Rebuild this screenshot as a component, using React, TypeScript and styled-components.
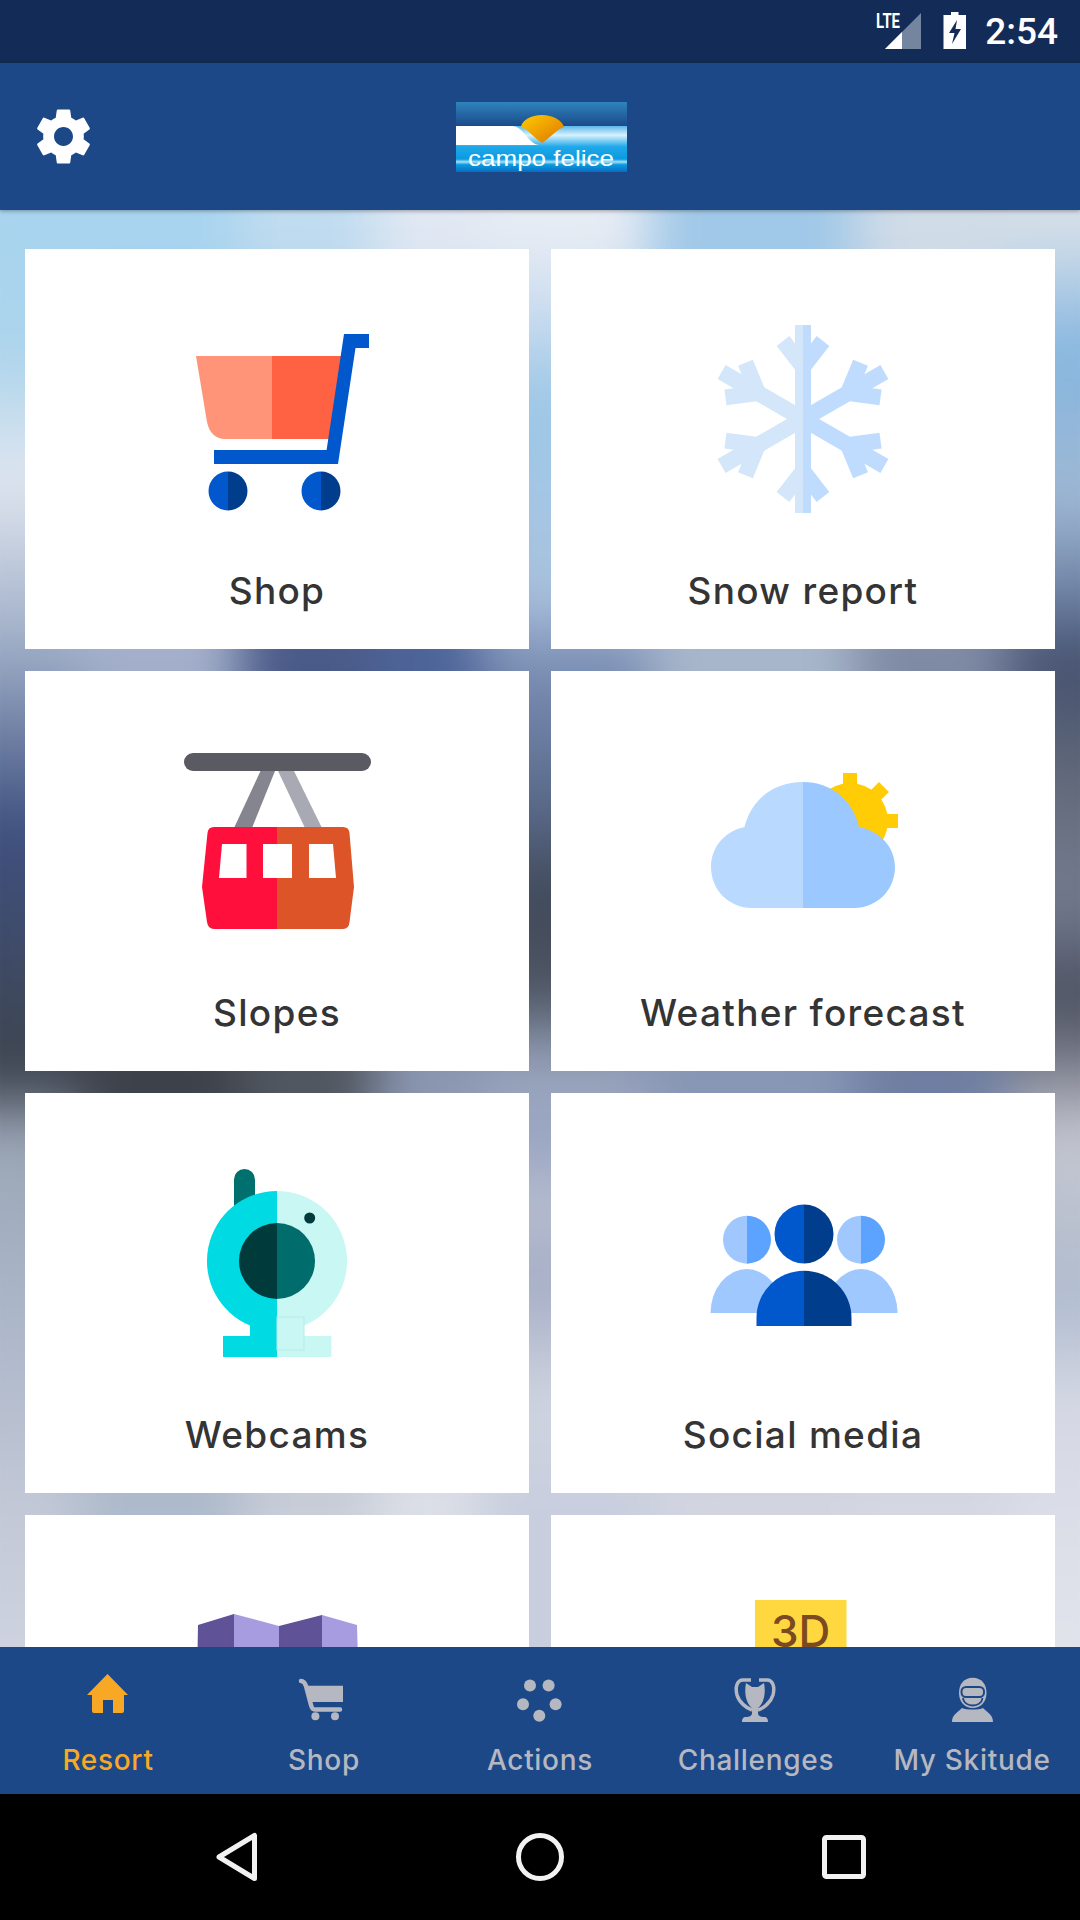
import React from "react";
import styled, { createGlobalStyle } from "styled-components";

const Global = createGlobalStyle`
  html, body { margin: 0; padding: 0; background: #000; }
  #root { width: 1080px; height: 1920px; }
`;

const Page = styled.div`
  width: 1080px;
  height: 1920px;
  display: flex;
  flex-direction: column;
  overflow: hidden;
  font-family: Inter, "Liberation Sans", sans-serif;
`;

const StatusBar = styled.div`
  height: 63px;
  flex: none;
  background: #132c57;
  display: flex;
  align-items: center;
  justify-content: flex-end;
  padding-right: 22px;
`;

const StatusIcons = styled.svg`
  width: 100px;
  height: 63px;
  margin-right: 19px;
`;

const Clock = styled.span`
  font-family: Roboto, sans-serif;
  font-weight: 500;
  font-size: 37px;
  color: #fff;
  line-height: 63px;
`;

const Header = styled.header`
  height: 147px;
  flex: none;
  background: #1c4888;
  position: relative;
  z-index: 2;
  box-shadow: 0 1px 4px rgba(0, 0, 0, 0.35);
  display: grid;
  grid-template-columns: 455.5px 171px 1fr;
  align-items: center;
`;

const GearIcon = styled.svg`
  width: 65px;
  height: 65px;
  margin-left: 31px;
  fill: #fff;
`;

const Logo = styled.svg`
  width: 171px;
  height: 70px;
`;

const Viewport = styled.main`
  flex: 1;
  position: relative;
  overflow: hidden;
  background: #8b9ab2;
`;

const Backdrop = styled.div`
  position: absolute;
  top: -60px;
  bottom: -60px;
  left: -60px;
  right: -60px;
  display: flex;
  filter: blur(26px);
`;

const BackdropColumn = styled.div<{ $width: number; $stops: string }>`
  flex: none;
  width: ${(p) => p.$width}px;
  background: linear-gradient(180deg, ${(p) => p.$stops});
`;

const Grid = styled.div`
  position: relative;
  display: grid;
  grid-template-columns: 504px 504px;
  grid-auto-rows: 400px;
  gap: 22px;
  padding: 39px 25px;
`;

const Card = styled.div`
  background: #fff;
  display: flex;
  flex-direction: column;
  align-items: center;
  padding-top: 61px;
  box-sizing: border-box;
`;

const CardIcon = styled.svg`
  width: 200px;
  height: 200px;
  flex: none;
  overflow: visible;
`;

const CardLabel = styled.div`
  margin-top: 61px;
  font-size: 37px;
  font-weight: 450;
  line-height: 40px;
  letter-spacing: 1.3px;
  color: #343434;
  white-space: nowrap;
`;

const BottomNav = styled.nav`
  height: 147px;
  flex: none;
  background: #1c4888;
  position: relative;
  z-index: 2;
  display: grid;
  grid-template-columns: repeat(5, 216px);
`;

const NavItem = styled.div<{ $active?: boolean }>`
  display: flex;
  flex-direction: column;
  align-items: center;
  padding-top: 20px;
  color: ${(p) => (p.$active ? "#f9a825" : "#b5b8c0")};
`;

const NavIcon = styled.svg`
  width: 60px;
  height: 60px;
  fill: currentColor;
  flex: none;
`;

const NavLabel = styled.div`
  margin-top: 16px;
  font-size: 28px;
  font-weight: 450;
  line-height: 34px;
  letter-spacing: 0.7px;
  white-space: nowrap;
`;

const SystemBar = styled.div`
  height: 126px;
  flex: none;
  background: #000;
  display: grid;
  grid-template-columns: repeat(3, 304px);
  justify-content: center;
  align-items: center;
  justify-items: center;
`;

const SystemIcon = styled.svg`
  width: 60px;
  height: 60px;
  fill: none;
  stroke: #f2f2f2;
  stroke-width: 5;
  stroke-linejoin: round;
`;

const IconCart = () => (
  <CardIcon viewBox="0 0 200 200">
    <path d="M19 46H95V129H48C38 129 32 122 30 112Z" fill="#ff9478" />
    <path d="M95 46H167L157 129H95Z" fill="#ff6243" />
    <path d="M167 24H192V38H178.5L161 154H37V140H149.6Z" fill="#0058cc" />
    <path d="M51 161.5a19.5 19.5 0 0 0 0 39Z" fill="#0058cc" />
    <path d="M51 161.5a19.5 19.5 0 0 1 0 39Z" fill="#003d8c" />
    <path d="M144 161.5a19.5 19.5 0 0 0 0 39Z" fill="#0058cc" />
    <path d="M144 161.5a19.5 19.5 0 0 1 0 39Z" fill="#003d8c" />
  </CardIcon>
);

const flakeAngles = [0, 60, 120, 180, 240, 300];

const FlakeArms = ({ color }: { color: string }) => (
  <g stroke={color} strokeWidth="16" fill="none">
    {flakeAngles.map((a) => (
      <g key={a} transform={`translate(100 109) rotate(${a})`}>
        <path d="M0 0V-94" />
        <path d="M-20 -78L0 -52L20 -78" />
      </g>
    ))}
  </g>
);

const IconSnow = () => (
  <CardIcon viewBox="0 0 200 200">
    <defs>
      <clipPath id="flakeLeft">
        <rect x="-10" y="0" width="110" height="220" />
      </clipPath>
      <clipPath id="flakeRight">
        <rect x="100" y="0" width="110" height="220" />
      </clipPath>
    </defs>
    <g clipPath="url(#flakeLeft)">
      <FlakeArms color="#d3e6fa" />
    </g>
    <g clipPath="url(#flakeRight)">
      <FlakeArms color="#bfdcff" />
    </g>
  </CardIcon>
);

const IconGondola = () => (
  <CardIcon viewBox="0 0 200 200">
    <path d="M83.500 39H98L75 96H57Z" fill="#85858f" />
    <path d="M101 39H117L145 96H128Z" fill="#a9a9b4" />
    <rect x="7" y="21" width="187" height="18" rx="9" fill="#5a5a62" />
    <path d="M100 95H37Q31 95 30.500 101L25 155L30 190Q31 197 37 197H100Z" fill="#ff0f3c" />
    <path d="M100 95H166Q172 95 172.500 101L177 155L172.500 190Q172 197 166 197H100Z" fill="#dc5427" />
    <path d="M45 112H69.500V146H42Z" fill="#fff" />
    <rect x="86" y="112" width="29" height="34" fill="#fff" />
    <path d="M132 112H156L159 146H132Z" fill="#fff" />
  </CardIcon>
);

const gearTeeth = [0, 45, 90, 135];

const IconWeather = () => (
  <CardIcon viewBox="0 0 200 200">
    <g fill="#ffcc05">
      <circle cx="147" cy="89" r="38" />
      {gearTeeth.map((a) => (
        <rect key={a} x="140" y="41" width="14" height="48" transform={`rotate(${a} 147 89)`} />
      ))}
    </g>
    <path d="M100 50C70 50 48 68 41.500 95C22 99 8 115 8 135C8 158 26 176 49 176H100Z" fill="#b9d9ff" />
    <path d="M100 50C128 50 150 68 156 95C177 99 192 115 192 135C192 158 174 176 151 176H100Z" fill="#9ac8ff" />
  </CardIcon>
);

const IconWebcam = () => (
  <CardIcon viewBox="0 0 200 200">
    <path d="M57 60V25.500a10.500 10.500 0 0 1 21 0V60Z" fill="#00706e" />
    <path d="M100 37a70 70 0 0 0 -27 134.600V182H46V203H100Z" fill="#00dbe3" />
    <path d="M100 37a70 70 0 0 1 27 134.600V182H154.400V203H100Z" fill="#c9f7f4" />
    <rect x="100" y="163" width="27" height="33" fill="none" stroke="#b5ecea" strokeWidth="1" />
    <path d="M100 69a38 38 0 0 0 0 76Z" fill="#003a3a" />
    <path d="M100 69a38 38 0 0 1 0 76Z" fill="#006c6c" />
    <circle cx="132.700" cy="64" r="5.500" fill="#003a3a" />
  </CardIcon>
);

const IconSocial = () => (
  <CardIcon viewBox="0 0 200 200">
    <path d="M44 115A37 44 0 0 0 7.500 159H44Z" fill="#9fc8ff" />
    <path d="M44 115A37 44 0 0 1 80 159H44Z" fill="#9fc8ff" />
    <path d="M158 115A37 44 0 0 0 122 159H158Z" fill="#9fc8ff" />
    <path d="M158 115A37 44 0 0 1 194.600 159H158Z" fill="#9fc8ff" />
    <path d="M44 61.700a24 24 0 0 0 0 48Z" fill="#a0c8ff" />
    <path d="M44 61.700a24 24 0 0 1 0 48Z" fill="#5ba3ff" />
    <path d="M158 61.700a24 24 0 0 0 0 48Z" fill="#a0c8ff" />
    <path d="M158 61.700a24 24 0 0 1 0 48Z" fill="#5ba3ff" />
    <path d="M101 50.500a29.500 29.500 0 0 0 0 59Z" fill="#0058cc" />
    <path d="M101 50.500a29.500 29.500 0 0 1 0 59Z" fill="#003d8c" />
    <path d="M101 116.700A47.500 47 0 0 0 53.500 163.700V172H101Z" fill="#0058cc" />
    <path d="M101 116.700A47.500 47 0 0 1 148.500 163.700V172H101Z" fill="#003d8c" />
  </CardIcon>
);

const IconMap = () => (
  <CardIcon viewBox="0 0 200 200">
    <path d="M21 49L57 38V160H19Z" fill="#5f5297" />
    <path d="M57 38L102 50V160H57Z" fill="#a89ce0" />
    <path d="M102 50L145 39V160H102Z" fill="#5f5297" />
    <path d="M145 39L180 49L183 160H145Z" fill="#a89ce0" />
  </CardIcon>
);

const ThreeDText = styled.text`
  font-family: Inter, sans-serif;
  font-size: 44px;
  font-weight: 500;
  fill: #7b4a22;
`;

const Icon3D = () => (
  <CardIcon viewBox="0 0 200 200">
    <rect x="52" y="24" width="91.500" height="130" fill="#ffd83f" />
    <ThreeDText x="97.700" y="71" textAnchor="middle">
      3D
    </ThreeDText>
  </CardIcon>
);

const cards: { label?: string; icon: React.ReactNode }[] = [
  { label: "Shop", icon: <IconCart /> },
  { label: "Snow report", icon: <IconSnow /> },
  { label: "Slopes", icon: <IconGondola /> },
  { label: "Weather forecast", icon: <IconWeather /> },
  { label: "Webcams", icon: <IconWebcam /> },
  { label: "Social media", icon: <IconSocial /> },
  { icon: <IconMap /> },
  { icon: <Icon3D /> },
];

type Stop = [number, string];

const toStops = (stops: Stop[]) => stops.map(([y, c]) => `${c} ${y - 150}px`).join(", ");

const plateau = (stops: Stop[]): Stop[] =>
  stops.flatMap(([y, c]): Stop[] => [
    [y - 25, c],
    [y + 25, c],
  ]);

const backdrop: { width: number; stops: Stop[] }[] = [
  {
    width: 140,
    stops: [
      [210, "#a8d4ef"], [350, "#acd4ec"], [480, "#e0e6f0"], [640, "#a0afc8"], [830, "#3f5080"],
      [1034, "#3e4756"], [1082, "#3f4450"], [1130, "#9aa5b5"], [1300, "#aab5c8"], [1504, "#c2c8d6"], [1647, "#cfd3e0"],
    ],
  },
  { width: 160, stops: plateau([[230, "#a8d4ef"], [660, "#a4b0cb"], [1082, "#3c4049"], [1504, "#aebbcc"]]) },
  { width: 135, stops: plateau([[230, "#c0dcf0"], [660, "#4a5a88"], [1082, "#50565f"], [1504, "#c8cdd8"]]) },
  { width: 105, stops: plateau([[230, "#e0e8f3"], [660, "#4c6398"], [1082, "#8a96b0"], [1504, "#dcdfe7"]]) },
  {
    width: 170,
    stops: [
      [230, "#e8edf4"], [300, "#d0dff0"], [400, "#9dc7e6"], [500, "#a4c7e5"], [600, "#a9c0dc"], [660, "#7d90b6"],
      [800, "#5a6b8c"], [900, "#404858"], [1000, "#505866"], [1050, "#8f9ab0"], [1082, "#9aa5c0"], [1150, "#9aa5c2"],
      [1200, "#b8bfd0"], [1280, "#a5adc5"], [1400, "#cfd4e0"], [1504, "#c8cede"],
    ],
  },
  { width: 205, stops: plateau([[230, "#a0c8e8"], [660, "#a8b6cb"], [1082, "#8796b5"], [1504, "#d2d5e0"]]) },
  { width: 153, stops: plateau([[230, "#d0dce8"], [660, "#7f8ba5"], [1082, "#6e7ea2"], [1504, "#d5d8e2"]]) },
  {
    width: 132,
    stops: [
      [230, "#d5dfe9"], [350, "#86b6e0"], [500, "#9fb8d4"], [600, "#6b7ea0"], [660, "#44506e"], [800, "#666d7c"],
      [900, "#747b90"], [1000, "#4a4f5e"], [1082, "#8c8f9c"], [1130, "#c5c7d0"], [1300, "#b0bccf"], [1400, "#d5d8e4"], [1647, "#e2e4ec"],
    ],
  },
];

const navItems: { label: string; active?: boolean; icon: React.ReactNode }[] = [
  {
    label: "Resort",
    active: true,
    icon: <path d="M29.500 7L50 28H46V44Q46 46 44 46H35V33H25V46H16Q14 46 14 44V28H9Z" />,
  },
  {
    label: "Shop",
    icon: (
      <>
        <path d="M11.500 18.700H49V35H16Z" />
        <path
          d="M7 14C10 14 11 16 12 19L17 38C18 42 19 42.500 21 42.500H46"
          fill="none"
          stroke="currentColor"
          strokeWidth="4.500"
          strokeLinecap="round"
        />
        <circle cx="21.400" cy="49.300" r="4" />
        <circle cx="41" cy="49.300" r="4" />
      </>
    ),
  },
  {
    label: "Actions",
    icon: (
      <>
        <circle cx="20" cy="18.600" r="6" />
        <circle cx="38.600" cy="18.600" r="6" />
        <circle cx="13" cy="37.300" r="6" />
        <circle cx="45.600" cy="37.300" r="6" />
        <circle cx="29.300" cy="48.700" r="6" />
      </>
    ),
  },
  {
    label: "Challenges",
    icon: (
      <>
        <path d="M20 16L26 20H32L38 16C40 26 38 36 32 41V46C32 49 35 50 38 50C41 50 42 52 42 55H16C16 52 17 50 20 50C23 50 26 49 26 46V41C20 36 18 26 20 16Z" />
        <path
          d="M25 13H17C11 13 9 20 11 28C13 35 20 41 26 43M33 13H41C47 13 49 20 47 28C45 35 38 41 32 43"
          fill="none"
          stroke="currentColor"
          strokeWidth="3.500"
        />
      </>
    ),
  },
  {
    label: "My Skitude",
    icon: (
      <>
        <path d="M10 55C10 48 15 46 20 41C24 43 37 43 41 41C46 46 51 48 51 55Z" />
        <path d="M30.700 10.700C22 10.700 17 17 17 26C17 35 23 41 30.700 41C38.500 41 44.500 35 44.500 26C44.500 17 39.500 10.700 30.700 10.700Z" />
        <rect x="19.500" y="20" width="22.500" height="10" rx="4.500" fill="#b5b8c0" stroke="#1c4888" strokeWidth="2" />
        <path d="M21 31C22 41 39.500 41 40.500 31" fill="none" stroke="#1c4888" strokeWidth="1.800" />
      </>
    ),
  },
];

export default function App() {
  return (
    <Page>
      <Global />
      <StatusBar>
        <StatusIcons viewBox="0 0 100 63">
          <path d="M19 49L55 13V49Z" fill="#73859f" />
          <path d="M19 49L36 32V49Z" fill="#fff" />
          <text
            x="10"
            y="28"
            textLength="24"
            lengthAdjust="spacingAndGlyphs"
            fontFamily="Roboto, sans-serif"
            fontWeight="700"
            fontSize="21"
            fill="#fff"
          >
            LTE
          </text>
          <path d="M77.500 15H85V12H92.500V15H100V49H77.500Z" fill="#fff" />
          <path d="M91 20L83 33H88.500L86 44L95 29H89.500Z" fill="#132c57" />
        </StatusIcons>
        <Clock>2:54</Clock>
      </StatusBar>
      <Header>
        <GearIcon viewBox="0 0 24 24">
          <path d="M19.43 12.98c.04-.32.07-.64.07-.98s-.03-.66-.07-.98l2.11-1.65c.19-.15.24-.42.12-.64l-2-3.46c-.12-.22-.39-.3-.61-.22l-2.49 1c-.52-.4-1.08-.73-1.69-.98l-.38-2.65C14.46 2.18 14.25 2 14 2h-4c-.25 0-.46.18-.49.42l-.38 2.65c-.61.25-1.17.59-1.69.98l-2.49-1c-.23-.09-.49 0-.61.22l-2 3.46c-.13.22-.07.49.12.64l2.11 1.65c-.04.32-.07.65-.07.98s.03.66.07.98l-2.11 1.65c-.19.15-.24.42-.12.64l2 3.46c.12.22.39.3.61.22l2.49-1c.52.4 1.08.73 1.69.98l.38 2.65c.03.24.24.42.49.42h4c.25 0 .46-.18.49-.42l.38-2.65c.61-.25 1.17-.59 1.69-.98l2.49 1c.23.09.49 0 .61-.22l2-3.46c.12-.22.07-.49-.12-.64l-2.11-1.65zM12 15.5c-1.93 0-3.5-1.57-3.5-3.5s1.57-3.5 3.5-3.5 3.5 1.57 3.5 3.5-1.57 3.5-3.5 3.5z" />
        </GearIcon>
        <Logo viewBox="0 0 171 70">
          <defs>
            <linearGradient id="sky" x1="0" y1="0" x2="0" y2="1">
              <stop offset="0" stopColor="#2e84bd" />
              <stop offset="1" stopColor="#1b4a8a" />
            </linearGradient>
            <linearGradient id="water" x1="0" y1="0" x2="0" y2="1">
              <stop offset="0" stopColor="#5cb6ea" />
              <stop offset="0.2" stopColor="#d8f2fd" />
              <stop offset="0.45" stopColor="#1fa8ea" />
              <stop offset="0.72" stopColor="#0b9be0" />
              <stop offset="0.78" stopColor="#a8e0f6" />
              <stop offset="0.84" stopColor="#0b9be0" />
              <stop offset="1" stopColor="#0a6cc0" />
            </linearGradient>
            <linearGradient id="sun" x1="0" y1="0" x2="1" y2="1">
              <stop offset="0" stopColor="#ffcb00" />
              <stop offset="1" stopColor="#dd7400" />
            </linearGradient>
          </defs>
          <rect width="171" height="24" fill="url(#sky)" />
          <rect y="24" width="171" height="46" fill="url(#water)" />
          <path d="M65 25C66 18 75 13 86 13C97 13 106 18 108 25C100 28 94 36 86 41C78 36 73 28 65 25Z" fill="url(#sun)" />
          <path d="M0 24H56C68 24 72 43 84 43H0Z" fill="#fff" />
          <text
            x="12"
            y="64"
            textLength="146"
            lengthAdjust="spacingAndGlyphs"
            fontFamily="Liberation Sans, sans-serif"
            fontSize="22"
            fill="#fff"
          >
            campo felice
          </text>
        </Logo>
      </Header>
      <Viewport>
        <Backdrop>
          {backdrop.map((c, i) => (
            <BackdropColumn key={i} $width={c.width} $stops={toStops(c.stops)} />
          ))}
        </Backdrop>
        <Grid>
          {cards.map((c, i) => (
            <Card key={i}>
              {c.icon}
              {c.label && <CardLabel>{c.label}</CardLabel>}
            </Card>
          ))}
        </Grid>
      </Viewport>
      <BottomNav>
        {navItems.map((n) => (
          <NavItem key={n.label} $active={n.active}>
            <NavIcon viewBox="0 0 60 60">{n.icon}</NavIcon>
            <NavLabel>{n.label}</NavLabel>
          </NavItem>
        ))}
      </BottomNav>
      <SystemBar>
        <SystemIcon viewBox="0 0 60 60">
          <path d="M48.500 8.500V51.500L13 30Z" />
        </SystemIcon>
        <SystemIcon viewBox="0 0 60 60">
          <circle cx="30" cy="30" r="21.500" />
        </SystemIcon>
        <SystemIcon viewBox="0 0 60 60">
          <rect x="10.500" y="10.500" width="39" height="39" rx="2" />
        </SystemIcon>
      </SystemBar>
    </Page>
  );
}
